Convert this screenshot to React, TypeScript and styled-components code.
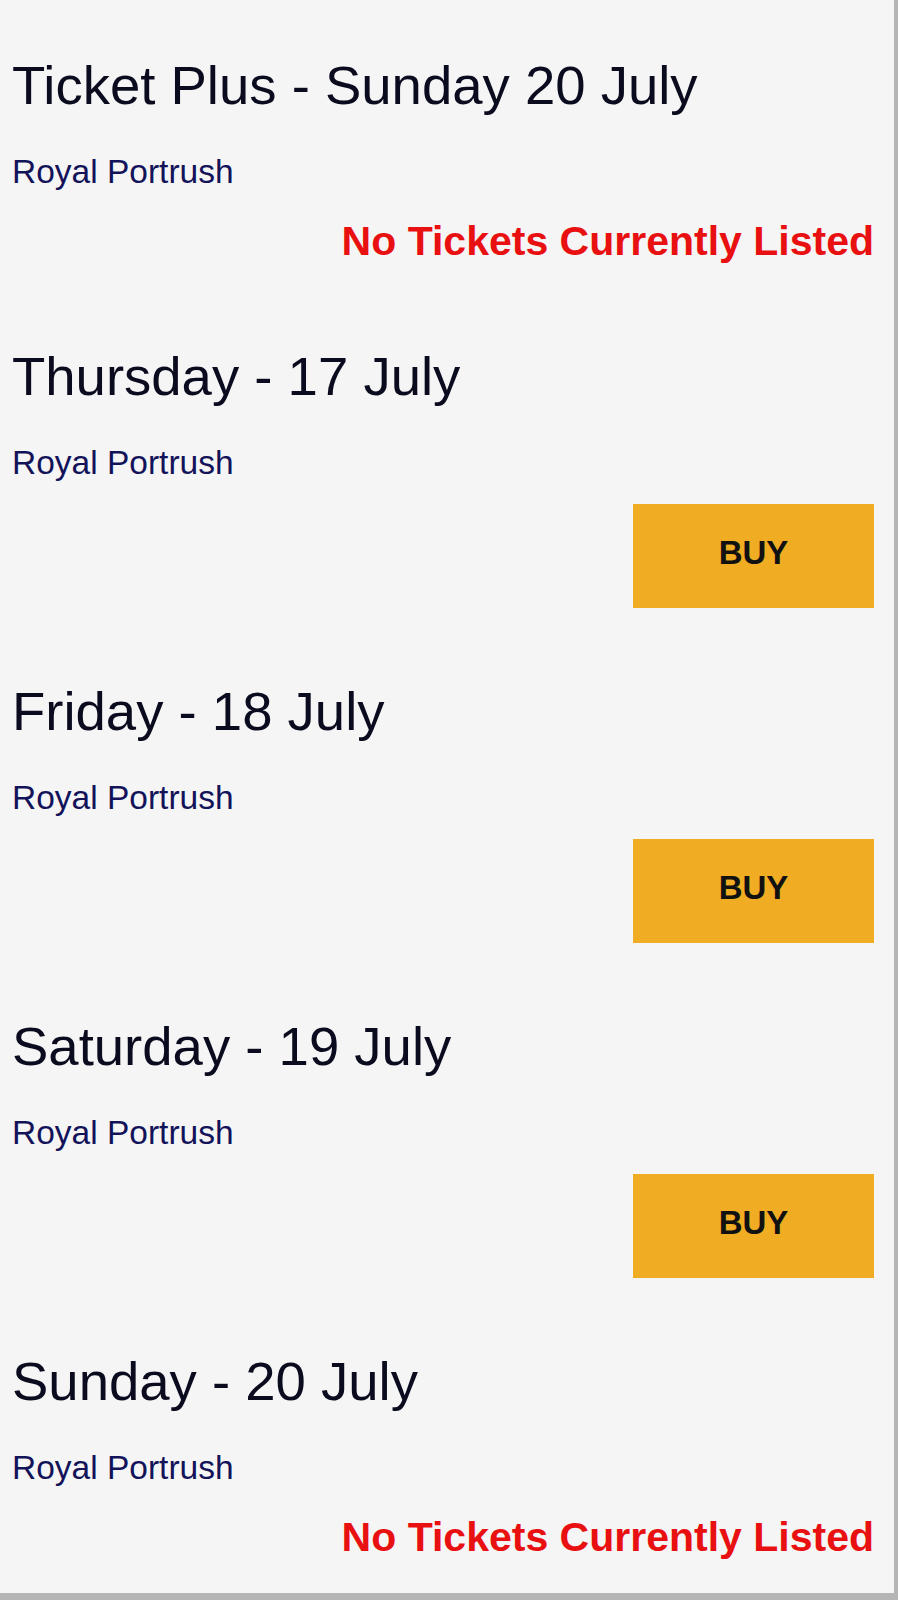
import React from 'react';
import styled, { createGlobalStyle } from 'styled-components';

const GlobalStyle = createGlobalStyle`
  html, body {
    margin: 0;
    padding: 0;
    background: #b5b5b5;
  }
  body {
    font-family: 'Liberation Sans', Arial, Helvetica, sans-serif;
  }
`;

const SFrame = styled.div`
  width: 894px;
  height: 1593px;
  overflow: hidden;
  background: #f5f5f5;
  box-sizing: border-box;
  padding: 55px 20px 0 12px;
`;

const SList = styled.div`
  display: flex;
  flex-direction: column;
`;

const SEvent = styled.section<{ $last?: boolean }>`
  display: flex;
  flex-direction: column;
  margin-bottom: ${(p) => (p.$last ? '0' : '73px')};
`;

const STitle = styled.h2`
  margin: 0;
  font-size: 54.5px;
  line-height: 62px;
  font-weight: 400;
  color: #0b0b1f;
`;

const SVenue = styled.div`
  margin-top: 37px;
  font-size: 33.5px;
  line-height: 36px;
  color: #13135a;
`;

const SActions = styled.div<{ $kind: 'buy' | 'none' }>`
  display: flex;
  justify-content: flex-end;
  margin-top: ${(p) => (p.$kind === 'buy' ? '23px' : '28px')};
  padding-bottom: ${(p) => (p.$kind === 'buy' ? '0' : '9px')};
`;

const SNoTickets = styled.div`
  font-size: 41px;
  line-height: 46px;
  font-weight: 700;
  color: #e81010;
`;

const SBuyButton = styled.button`
  width: 241px;
  height: 104px;
  border: none;
  border-radius: 0;
  background: #f0ac22;
  color: #111111;
  font-family: inherit;
  font-size: 33px;
  font-weight: 700;
  cursor: pointer;
  padding: 0 0 6px;
`;

interface EventItem {
  title: string;
  venue: string;
  available: boolean;
}

const events: EventItem[] = [
  { title: 'Ticket Plus - Sunday 20 July', venue: 'Royal Portrush', available: false },
  { title: 'Thursday - 17 July', venue: 'Royal Portrush', available: true },
  { title: 'Friday - 18 July', venue: 'Royal Portrush', available: true },
  { title: 'Saturday - 19 July', venue: 'Royal Portrush', available: true },
  { title: 'Sunday - 20 July', venue: 'Royal Portrush', available: false },
];

export default function App() {
  return (
    <>
      <GlobalStyle />
      <SFrame>
        <SList>
          {events.map((ev, i) => (
            <SEvent key={ev.title} $last={i === events.length - 1}>
              <STitle>{ev.title}</STitle>
              <SVenue>{ev.venue}</SVenue>
              <SActions $kind={ev.available ? 'buy' : 'none'}>
                {ev.available ? (
                  <SBuyButton>BUY</SBuyButton>
                ) : (
                  <SNoTickets>No Tickets Currently Listed</SNoTickets>
                )}
              </SActions>
            </SEvent>
          ))}
        </SList>
      </SFrame>
    </>
  );
}
